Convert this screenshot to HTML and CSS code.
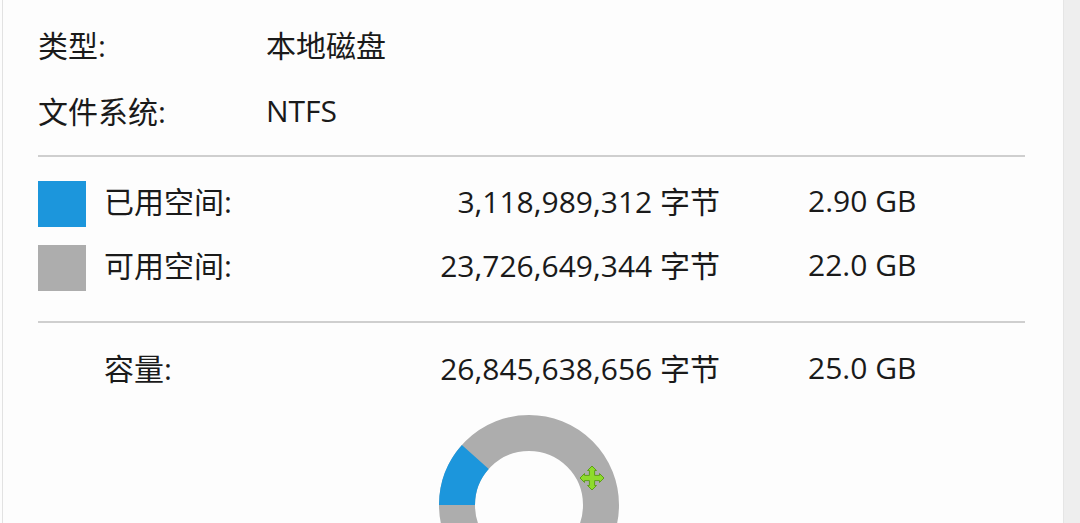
FILE: index.html
```html
<!DOCTYPE html>
<html lang="zh-CN">
<head>
  <meta charset="UTF-8">
  <title>磁盘属性</title>
  <link rel="stylesheet" href="styles.css">
</head>
<body>
  <div class="panel">
    <div class="info-row">
      <span class="info-label">类型:</span>
      <span class="info-value">本地磁盘</span>
    </div>
    <div class="info-row">
      <span class="info-label">文件系统:</span>
      <span class="info-value">NTFS</span>
    </div>

    <div class="divider"></div>

    <div class="space-row first">
      <span class="swatch used"></span>
      <span class="space-label">已用空间:</span>
      <span class="space-bytes">3,118,989,312 字节</span>
      <span class="space-size">2.90 GB</span>
    </div>
    <div class="space-row">
      <span class="swatch free"></span>
      <span class="space-label">可用空间:</span>
      <span class="space-bytes">23,726,649,344 字节</span>
      <span class="space-size">22.0 GB</span>
    </div>

    <div class="divider second"></div>

    <div class="space-row capacity">
      <span class="swatch blank"></span>
      <span class="space-label">容量:</span>
      <span class="space-bytes">26,845,638,656 字节</span>
      <span class="space-size">25.0 GB</span>
    </div>

    <div class="chart">
      <svg width="180" height="180" viewBox="0 0 180 180">
        <!-- free space ring -->
        <circle cx="90" cy="90" r="72" fill="none" stroke="#adadad" stroke-width="36"/>
        <!-- used space: 2.90 / 25.0 of the ring, starting at 9 o'clock -->
        <path d="M18 90 A72 72 0 0 1 36.3 42" fill="none" stroke="#1c96dc" stroke-width="36"/>
        <!-- move cursor -->
        <g transform="translate(153 63)">
          <path d="M0 -12 L4.5 -7.5 L2.6 -7.5 L2.6 -2.6 L7.5 -2.6 L7.5 -4.5 L12 0 L7.5 4.5 L7.5 2.6 L2.6 2.6 L2.6 7.5 L4.5 7.5 L0 12 L-4.5 7.5 L-2.6 7.5 L-2.6 2.6 L-7.5 2.6 L-7.5 4.5 L-12 0 L-7.5 -4.5 L-7.5 -2.6 L-2.6 -2.6 L-2.6 -7.5 L-4.5 -7.5 Z"
                fill="#8edb2c" stroke="#5e9f18" stroke-width="1" stroke-linejoin="round"/>
        </g>
      </svg>
    </div>
  </div>
  <div class="scroll-strip"></div>
</body>
</html>
```

FILE: styles.css
```css
html, body {
  height: 100%;
}
body {
  margin: 0;
  display: flex;
  background: #fdfdfd;
  color: #1a1a1a;
  font-family: "Open Sans", "Noto Sans CJK SC", sans-serif;
  font-size: 30px;
  overflow: hidden;
}
.panel {
  flex: 0 0 auto;
  width: 1061px;
  height: 100%;
  margin-left: 2px;
  border-left: 1px solid #e2e2e2;
  padding: 13px 38px 0 35px;
  box-sizing: border-box;
  overflow: hidden;
}
.scroll-strip {
  flex: 1;
  background: #eeeeee;
  border-left: 1px solid #e5e5e5;
}

/* text sits a few px above the row centre, as in the dialog */
.info-row {
  display: flex;
  align-items: center;
  height: 66px;
  box-sizing: border-box;
  padding-bottom: 4px;
}
.info-label {
  width: 228px;
}

.divider {
  height: 2px;
  background: #cfcfcf;
  margin-top: 10px;
  margin-bottom: 15px;
}
.divider.second {
  margin-top: 21px;
  margin-bottom: 16px;
}

.space-row {
  display: flex;
  align-items: center;
  height: 64px;
  box-sizing: border-box;
  padding-bottom: 8px;
}
.swatch {
  width: 48px;
  height: 46px;
  margin-top: 8px;
  margin-right: 18px;
  flex: 0 0 auto;
}
.swatch.used  { background: #1c96dc; }
.swatch.free  { background: #adadad; }
.swatch.blank { background: transparent; }

.space-label {
  width: 300px;
}
.space-bytes {
  width: 316px;
  text-align: right;
}
.space-size {
  margin-left: 88px;
}

.chart {
  padding-left: 401px;
  margin-top: 12px;
}
.chart svg {
  display: block;
}
```
